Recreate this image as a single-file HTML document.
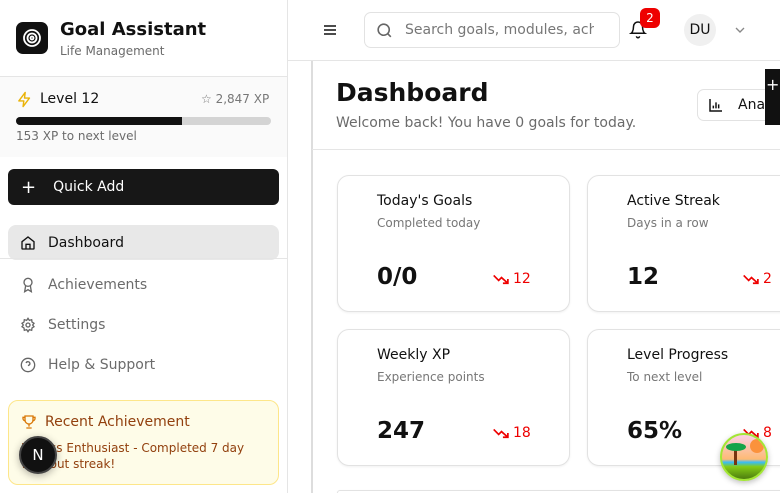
<!DOCTYPE html>
<html style="width:780px;height:493px;overflow:hidden"><head><style>
*{box-sizing:border-box;margin:0;padding:0}
body{width:780px;height:493px;overflow:hidden;font-family:"DejaVu Sans","Liberation Sans",sans-serif;background:#fff;position:relative;color:#111}
.abs{position:absolute}
.sb{left:0;top:0;width:288px;height:493px;border-right:1px solid #e5e5e5;background:#fff}
.nav{left:8px;width:271px;height:35px;display:flex;align-items:center;padding-left:12px;font-size:14px;color:#6b6b6b}
.nav svg{margin-right:12px}
.card{width:233px;height:137px;border:1px solid #e2e2e2;border-radius:12px;background:#fff;box-shadow:0 1px 2px rgba(0,0,0,.06)}
.card .t{position:absolute;left:39px;top:17px;font-size:14px;color:#111}
.card .s{position:absolute;left:39px;top:40px;font-size:12px;color:#777}
.card .v{position:absolute;left:39px;top:88px;font-size:23px;font-weight:bold;color:#111}
.card .d{position:absolute;left:155px;top:95px;font-size:14px;color:#e00;display:flex;align-items:center;gap:3px}
</style></head><body>
<div class="abs sb">
  <div class="abs" style="left:16px;top:22px;width:32px;height:32px;background:#111;border-radius:7px;display:flex;align-items:center;justify-content:center">
    <svg width="20" height="20" viewBox="0 0 20 20" fill="none" stroke="#fff" stroke-width="1.8"><circle cx="10" cy="10" r="8"/><circle cx="10" cy="10" r="4.5"/><circle cx="10" cy="10" r="1.5"/></svg>
  </div>
  <div class="abs" style="left:60px;top:19px;font-size:18px;font-weight:bold">Goal Assistant</div>
  <div class="abs" style="left:60px;top:44px;font-size:12px;color:#6b6b6b">Life Management</div>
  <div class="abs" style="left:0;top:76px;width:287px;height:81px;background:#fafafa;border-top:1px solid #e5e5e5"></div>
  <svg class="abs" style="left:16px;top:91px" width="17" height="17" viewBox="0 0 24 24" fill="none" stroke="#eab308" stroke-width="2" stroke-linejoin="round"><path d="M13 2L4 14h7l-1 8 9-12h-7z"/></svg>
  <div class="abs" style="left:40px;top:91px;font-size:14px">Level 12</div>
  <div class="abs" style="left:201px;top:92px;font-size:12px;color:#777">☆ 2,847 XP</div>
  <div class="abs" style="left:16px;top:117px;width:255px;height:8px;border-radius:4px;background:#d4d4d4;overflow:hidden"><div style="width:166px;height:8px;background:#111"></div></div>
  <div class="abs" style="left:16px;top:129px;font-size:12px;color:#6b6b6b">153 XP to next level</div>
  <div class="abs" style="left:8px;top:169px;width:271px;height:36px;background:#171717;border-radius:6px;color:#fff;font-size:14px;display:flex;align-items:center;padding-left:13px"><span style="font-size:18px;margin-right:17px">+</span>Quick Add</div>
  <div class="abs nav" style="top:225px;background:#e8e8e8;border-radius:8px;color:#111">
    <svg width="16" height="16" viewBox="0 0 24 24" fill="none" stroke="#111" stroke-width="2"><path d="M3 10l9-7 9 7v10a1 1 0 0 1-1 1H4a1 1 0 0 1-1-1z"/><path d="M9 21v-7h6v7"/></svg>Dashboard</div>
  <div class="abs" style="left:0;top:258px;width:287px;height:1px;background:#e5e5e5"></div>
  <div class="abs nav" style="top:267px"><svg width="16" height="16" viewBox="0 0 24 24" fill="none" stroke="#666" stroke-width="2"><circle cx="12" cy="8" r="6"/><path d="M8.5 13L7 22l5-3 5 3-1.5-9"/></svg>Achievements</div>
  <div class="abs nav" style="top:307px"><svg width="16" height="16" viewBox="0 0 24 24" fill="none" stroke="#666" stroke-width="2"><circle cx="12" cy="12" r="3"/><path d="M12 2l2 3 3.5-1 .5 3.5 3 2-2 2.5 2 2.5-3 2-.5 3.5-3.5-1-2 3-2-3-3.5 1-.5-3.5-3-2 2-2.5-2-2.5 3-2 .5-3.5 3.5 1z"/></svg>Settings</div>
  <div class="abs nav" style="top:347px"><svg width="16" height="16" viewBox="0 0 24 24" fill="none" stroke="#666" stroke-width="2"><circle cx="12" cy="12" r="10"/><path d="M9.1 9a3 3 0 0 1 5.8 1c0 2-3 3-3 3"/><path d="M12 17h.01"/></svg>Help &amp; Support</div>
  <div class="abs" style="left:8px;top:400px;width:271px;height:85px;background:#fefce8;border:1px solid #fde68a;border-radius:10px"></div>
  <svg class="abs" style="left:21px;top:414px" width="16" height="16" viewBox="0 0 24 24" fill="none" stroke="#d97706" stroke-width="2"><path d="M6 3h12v6a6 6 0 0 1-12 0z"/><path d="M6 5H3v2a3 3 0 0 0 3 3M18 5h3v2a3 3 0 0 1-3 3M12 15v4M8 21h8"/></svg>
  <div class="abs" style="left:45px;top:414px;font-size:14px;color:#92400e">Recent Achievement</div>
  <div class="abs" style="left:21px;top:440px;font-size:12px;color:#92400e;line-height:16px;width:250px">Fitness Enthusiast - Completed 7 day workout streak!</div>
  <div class="abs" style="left:19px;top:436px;width:38px;height:38px;border-radius:50%;background:#111;border:2px solid #444;color:#fff;font-size:15px;display:flex;align-items:center;justify-content:center;box-shadow:0 2px 8px rgba(0,0,0,.3)">N</div>
</div>
<div class="abs" style="left:288px;top:60px;width:492px;height:1px;background:#e5e5e5"></div>
<svg class="abs" style="left:322px;top:22px" width="16" height="16" viewBox="0 0 24 24" fill="none" stroke="#111" stroke-width="2.4"><path d="M3 6h18M3 12h18M3 18h18"/></svg>
<div class="abs" style="left:364px;top:12px;width:256px;height:36px;border:1px solid #e2e2e2;border-radius:7px;overflow:hidden">
  <svg class="abs" style="left:10px;top:8px" width="19" height="19" viewBox="0 0 24 24" fill="none" stroke="#666" stroke-width="2"><circle cx="11" cy="11" r="7"/><path d="M20 20l-4-4"/></svg>
  <div class="abs" style="left:40px;top:9px;font-size:14px;color:#777;white-space:nowrap;width:189px;overflow:hidden">Search goals, modules, achievements</div>
</div>
<svg class="abs" style="left:629px;top:20px" width="18" height="19" viewBox="0 0 24 24" fill="none" stroke="#111" stroke-width="2"><path d="M6 8a6 6 0 0 1 12 0c0 7 3 9 3 9H3s3-2 3-9"/><path d="M10 21a2 2 0 0 0 4 0"/></svg>
<div class="abs" style="left:640px;top:8px;width:20px;height:20px;border-radius:6px;background:#e00;color:#fff;font-size:12px;display:flex;align-items:center;justify-content:center">2</div>
<div class="abs" style="left:684px;top:14px;width:32px;height:32px;border-radius:50%;background:#f0f0f0;font-size:14px;display:flex;align-items:center;justify-content:center">DU</div>
<svg class="abs" style="left:732px;top:22px" width="16" height="16" viewBox="0 0 24 24" fill="none" stroke="#888" stroke-width="2"><path d="M6 9l6 6 6-6"/></svg>
<div class="abs" style="left:311px;top:61px;width:2px;height:432px;background:#ddd"></div>
<div class="abs" style="left:312px;top:149px;width:468px;height:1px;background:#e5e5e5"></div>
<div class="abs" style="left:336px;top:78px;font-size:25px;font-weight:bold">Dashboard</div>
<div class="abs" style="left:336px;top:115px;font-size:14px;color:#6b6b6b">Welcome back! You have 0 goals for today.</div>
<div class="abs" style="left:697px;top:89px;width:100px;height:32px;border:1px solid #e2e2e2;border-radius:7px;font-size:14px;display:flex;align-items:center;padding-left:10px;white-space:nowrap">
<svg width="16" height="16" viewBox="0 0 24 24" fill="none" stroke="#111" stroke-width="2.2" style="margin-right:14px;flex:none"><path d="M3 3v18h18M8 17v-4M12 17V8M16 17v-6"/></svg>Analytics</div>
<div class="abs" style="left:765px;top:69px;width:15px;height:56px;background:#111;color:#fff;font-size:16px;padding-left:1px;padding-top:6px">+</div>
<div class="abs card" style="left:337px;top:175px"><div class="t">Today's Goals</div><div class="s">Completed today</div><div class="v">0/0</div><div class="d"><svg width="17" height="12" viewBox="0 0 24 16" fill="none" stroke="#e00" stroke-width="2.4"><path d="M1 3l7 7 4-4 9 8M14 14h7V8"/></svg>12</div></div>
<div class="abs card" style="left:587px;top:175px"><div class="t">Active Streak</div><div class="s">Days in a row</div><div class="v">12</div><div class="d"><svg width="17" height="12" viewBox="0 0 24 16" fill="none" stroke="#e00" stroke-width="2.4"><path d="M1 3l7 7 4-4 9 8M14 14h7V8"/></svg>2</div></div>
<div class="abs card" style="left:337px;top:329px"><div class="t">Weekly XP</div><div class="s">Experience points</div><div class="v">247</div><div class="d"><svg width="17" height="12" viewBox="0 0 24 16" fill="none" stroke="#e00" stroke-width="2.4"><path d="M1 3l7 7 4-4 9 8M14 14h7V8"/></svg>18</div></div>
<div class="abs card" style="left:587px;top:329px"><div class="t">Level Progress</div><div class="s">To next level</div><div class="v">65%</div><div class="d"><svg width="17" height="12" viewBox="0 0 24 16" fill="none" stroke="#e00" stroke-width="2.4"><path d="M1 3l7 7 4-4 9 8M14 14h7V8"/></svg>8</div></div>
<div class="abs card" style="left:337px;top:490px;width:460px;height:3px;border-bottom:none;border-radius:12px 12px 0 0"></div>
<div class="abs" style="left:720px;top:433px;width:48px;height:48px;border-radius:50%;overflow:hidden;border:2px solid #a3e635;box-shadow:0 2px 6px rgba(0,0,0,.25);background:linear-gradient(#fbcfe8,#fdba74 55%,#38bdf8 62%,#84cc16 72%,#4d7c0f)">
<div class="abs" style="left:28px;top:4px;width:14px;height:14px;border-radius:50%;background:#fb923c"></div>
<div class="abs" style="left:12px;top:12px;width:3px;height:18px;background:#78350f"></div>
<div class="abs" style="left:4px;top:8px;width:20px;height:8px;border-radius:50%;background:#16a34a"></div>
</div>
</body></html>
